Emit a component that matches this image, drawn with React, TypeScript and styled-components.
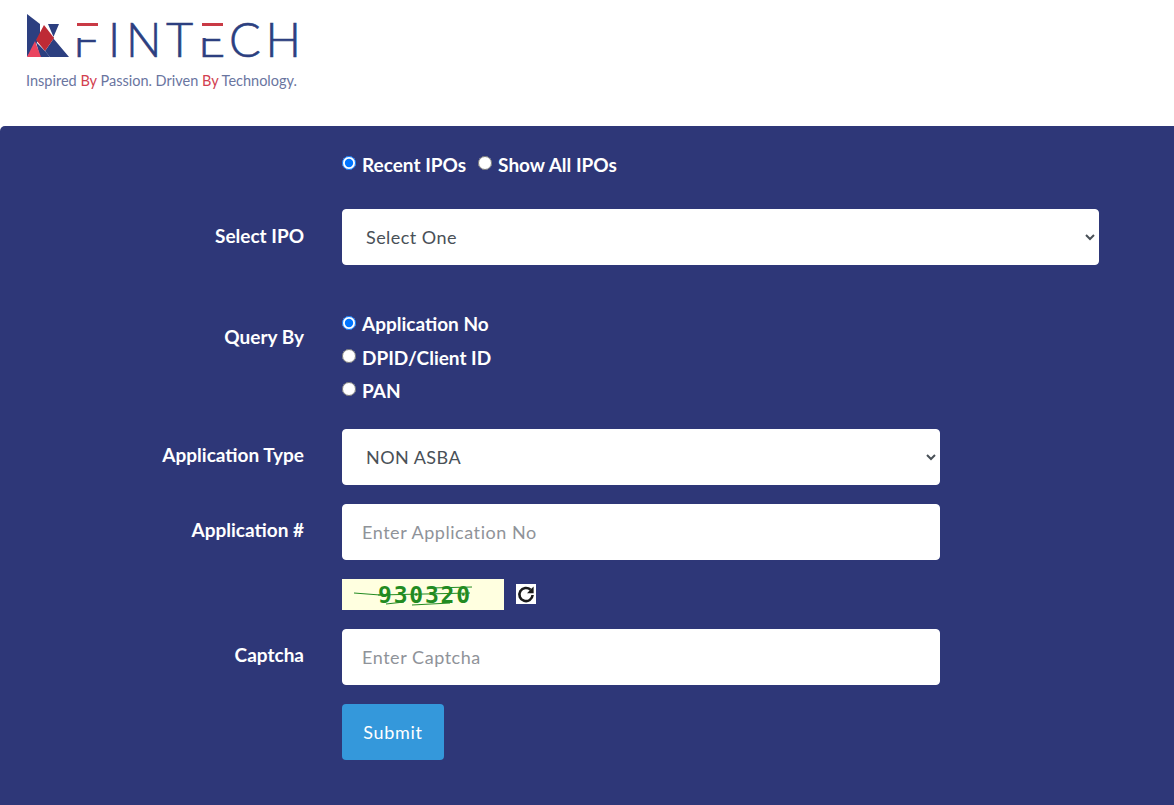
import styled, { createGlobalStyle } from 'styled-components';

const GlobalStyle = createGlobalStyle`
  html, body {
    margin: 0;
    padding: 0;
    background: #fff;
    font-family: 'Lato', 'Liberation Sans', sans-serif;
  }
`;

const Header = styled.header`
  height: 126px;
  padding: 6px 0 0 26px;
  box-sizing: border-box;
`;

const Tagline = styled.div`
  font-family: 'Lato', sans-serif;
  font-size: 14.5px;
  line-height: 18px;
  color: #6a759f;
  white-space: nowrap;
`;

const Red = styled.span`
  color: #d2404f;
`;

const Panel = styled.main`
  min-height: 679px;
  box-sizing: border-box;
  padding: 24px 0 0;
  background: #2e3778;
  border-radius: 5px 0 0 0;
  color: #fff;
`;

const Row = styled.div<{ $after: number }>`
  display: grid;
  grid-template-columns: 304px 1fr;
  column-gap: 38px;
  margin-bottom: ${(p) => p.$after}px;
`;

const Label = styled.label<{ $top: number }>`
  padding-top: ${(p) => p.$top}px;
  font-size: 19px;
  font-weight: 700;
  line-height: 27px;
  text-align: right;
`;

const InlineRadios = styled.div`
  display: flex;
  align-items: center;
  gap: 12px;
  height: 28px;
`;

const StackedRadios = styled.div`
  display: flex;
  flex-direction: column;
`;

const RadioLabel = styled.label`
  display: flex;
  align-items: center;
  gap: 6px;
  height: 33.4px;
  font-size: 19px;
  font-weight: 700;
  line-height: 27px;
`;

const Radio = styled.input.attrs({ type: 'radio' })`
  width: 14px;
  height: 14px;
  margin: -2px 0 0;
`;

const Select = styled.select<{ $width: number }>`
  display: block;
  width: ${(p) => p.$width}px;
  height: 56px;
  padding: 0 12px 0 19px;
  box-sizing: border-box;
  border: 1px solid #fff;
  border-radius: 4px;
  background: #fff;
  color: #495057;
  font-family: inherit;
  font-size: 18px;
  letter-spacing: 0.45px;
`;

const TextInput = styled.input`
  display: block;
  width: 598px;
  height: 56px;
  padding: 0 19px;
  box-sizing: border-box;
  border: 1px solid #fff;
  border-radius: 4px;
  background: #fff;
  color: #495057;
  font-family: inherit;
  font-size: 18px;
  letter-spacing: 0.55px;

  &::placeholder {
    color: #8f9399;
    opacity: 1;
  }
`;

const CaptchaLine = styled.div`
  display: flex;
  align-items: center;
  gap: 12px;
`;

const CaptchaImage = styled.svg`
  display: block;
  width: 162px;
  height: 31px;
`;

const RefreshButton = styled.button`
  display: flex;
  align-items: center;
  justify-content: center;
  width: 20px;
  height: 20px;
  padding: 0;
  border: 0;
  background: #fff;
`;

const SubmitButton = styled.button`
  display: block;
  width: 102px;
  height: 56px;
  border: 0;
  border-radius: 4px;
  background: #3498db;
  color: #fff;
  font-family: inherit;
  font-size: 18px;
  letter-spacing: 0.7px;
`;

const LogoSvg = styled.svg`
  display: block;
`;

const navy = '#2c3f80';

// viewBox uses page coordinates so the points read the same as the picture
const Logo = () => (
  <LogoSvg width="290" height="66" viewBox="26 6 290 66">
    <polygon points="27,14 40,24 40,38 27,57" fill={navy} />
    <polygon points="48,24 59,24 53,38 69,57 50,57 45,51 54,38" fill={navy} />
    <polygon points="36,42 45,51 50,57 40,57" fill={navy} />
    <polygon points="27,57 35,41 41,57" fill="#ea4560" />
    <polygon points="44,25 54,38 45,51 36,40" fill="#be2a35" />
    <text
      x="73 108 126 166 198 229 265.5"
      y="57"
      fontFamily="Lato, sans-serif"
      fontWeight="300"
      fontSize="47"
      fill={navy}
      stroke={navy}
      strokeWidth="0.6"
    >
      FINTECH
    </text>
    {/* the top bars of F and E stand apart from the letter and are red */}
    <rect x="76" y="21" width="24" height="17" fill="#fff" />
    <rect x="201" y="21" width="24" height="17" fill="#fff" />
    <rect x="77" y="23" width="21" height="3" fill="#c93a45" />
    <rect x="202" y="23" width="21" height="3" fill="#c93a45" />
  </LogoSvg>
);

const Captcha = () => (
  <CaptchaImage viewBox="0 0 162 31">
    <rect width="162" height="31" fill="#ffffe0" />
    <path
      d="M12 14 L38 16 M44 25 L62 23 M70 26 L108 24 M88 9 L130 8 M36 16 L128 14"
      stroke="#228b22"
      strokeWidth="1"
      fill="none"
    />
    <text
      x="36"
      y="24"
      fontFamily="'DejaVu Sans Mono', monospace"
      fontWeight="700"
      fontSize="23"
      fill="#228b22"
      textLength="92"
    >
      930320
    </text>
  </CaptchaImage>
);

const RefreshIcon = () => (
  <svg width="20" height="20" viewBox="0 0 20 20">
    <path d="M14.6 5.8 A6.6 6.6 0 1 0 16.6 11" fill="none" stroke="#1a1a1a" strokeWidth="2.6" />
    <polygon points="17.6,2.6 17.6,9.2 11,9.2" fill="#1a1a1a" />
  </svg>
);

export default function App() {
  return (
    <>
      <GlobalStyle />
      <Header>
        <Logo />
        <Tagline>
          Inspired <Red>By</Red> Passion. Driven <Red>By</Red> Technology.
        </Tagline>
      </Header>
      <Panel>
        <Row $after={31}>
          <span />
          <InlineRadios>
            <RadioLabel>
              <Radio name="scope" defaultChecked />
              Recent IPOs
            </RadioLabel>
            <RadioLabel>
              <Radio name="scope" />
              Show All IPOs
            </RadioLabel>
          </InlineRadios>
        </Row>
        <Row $after={42}>
          <Label $top={13}>Select IPO</Label>
          <Select $width={757} defaultValue="">
            <option value="">Select One</option>
          </Select>
        </Row>
        <Row $after={21.8}>
          <Label $top={16}>Query By</Label>
          <StackedRadios>
            <RadioLabel>
              <Radio name="query" defaultChecked />
              Application No
            </RadioLabel>
            <RadioLabel>
              <Radio name="query" />
              DPID/Client ID
            </RadioLabel>
            <RadioLabel>
              <Radio name="query" />
              PAN
            </RadioLabel>
          </StackedRadios>
        </Row>
        <Row $after={19}>
          <Label $top={12}>Application Type</Label>
          <Select $width={598} defaultValue="NON ASBA">
            <option>NON ASBA</option>
            <option>ASBA</option>
          </Select>
        </Row>
        <Row $after={19}>
          <Label $top={12}>Application #</Label>
          <TextInput placeholder="Enter Application No" />
        </Row>
        <Row $after={19}>
          <span />
          <CaptchaLine>
            <Captcha />
            <RefreshButton type="button" aria-label="Refresh captcha">
              <RefreshIcon />
            </RefreshButton>
          </CaptchaLine>
        </Row>
        <Row $after={19}>
          <Label $top={12}>Captcha</Label>
          <TextInput placeholder="Enter Captcha" />
        </Row>
        <Row $after={0}>
          <span />
          <SubmitButton type="button">Submit</SubmitButton>
        </Row>
      </Panel>
    </>
  );
}
